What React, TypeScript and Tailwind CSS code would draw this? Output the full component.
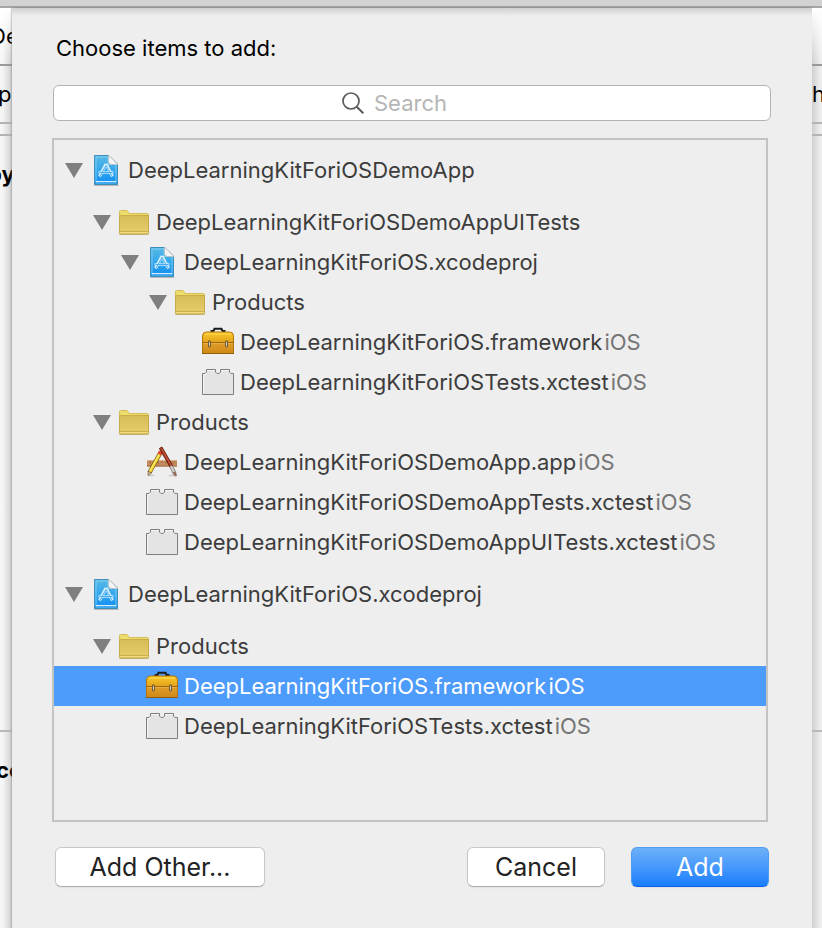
import { useId } from "react";

type Kind = "project" | "folder" | "toolbox" | "bundle" | "app";

type Item = {
  name: string;
  kind: Kind;
  level: number;
  platform?: string;
  selected?: boolean;
};

const items: Item[] = [
  { name: "DeepLearningKitForiOSDemoApp", kind: "project", level: 0 },
  { name: "DeepLearningKitForiOSDemoAppUITests", kind: "folder", level: 1 },
  { name: "DeepLearningKitForiOS.xcodeproj", kind: "project", level: 2 },
  { name: "Products", kind: "folder", level: 3 },
  { name: "DeepLearningKitForiOS.framework", kind: "toolbox", level: 4, platform: "iOS" },
  { name: "DeepLearningKitForiOSTests.xctest", kind: "bundle", level: 4, platform: "iOS" },
  { name: "Products", kind: "folder", level: 1 },
  { name: "DeepLearningKitForiOSDemoApp.app", kind: "app", level: 2, platform: "iOS" },
  { name: "DeepLearningKitForiOSDemoAppTests.xctest", kind: "bundle", level: 2, platform: "iOS" },
  { name: "DeepLearningKitForiOSDemoAppUITests.xctest", kind: "bundle", level: 2, platform: "iOS" },
  { name: "DeepLearningKitForiOS.xcodeproj", kind: "project", level: 0 },
  { name: "Products", kind: "folder", level: 1 },
  { name: "DeepLearningKitForiOS.framework", kind: "toolbox", level: 2, platform: "iOS", selected: true },
  { name: "DeepLearningKitForiOSTests.xctest", kind: "bundle", level: 2, platform: "iOS" },
];

const indents = ["pl-[11px]", "pl-[39px]", "pl-[67px]", "pl-[95px]", "pl-[123px]"];

function ProjectIcon() {
  const id = useId();
  return (
    <svg viewBox="0 0 32 32" className="size-8 shrink-0" aria-hidden="true">
      <defs>
        <linearGradient id={id} x1="0" y1="0" x2="0" y2="1">
          <stop offset="0" stopColor="#58b9e4" />
          <stop offset="0.5" stopColor="#35a8ee" />
          <stop offset="1" stopColor="#0d8bf0" />
        </linearGradient>
      </defs>
      <path d="M4 31.500h24.500" stroke="#b9b9b9" strokeWidth="1" />
      <path d="M4.500 1.500H18.500L27.500 10V30.500H4.500Z" fill={`url(#${id})`} stroke="#3b90bd" />
      <path d="M6 3H18V10.500H26V29H6Z" fill="none" stroke="#8ed2f6" strokeWidth="0.8" />
      <path d="M6 27.500H26" stroke="#d5effd" strokeWidth="1" />
      <path d="M18.500 1L28 10.500H21.500Q18.500 10.500 18.500 7.500Z" fill="#f4f4f4" stroke="#b8b8b8" strokeWidth="0.7" />
      <path d="M8.500 18.500H23.500" stroke="#b5e2fb" strokeWidth="2.600" />
      <path d="M16 10L9.500 22.500M16 10L22.500 22.500" fill="none" stroke="#d3effd" strokeWidth="3" />
      <path d="M16 11.500L9.800 22.500M16 11.500L22.200 22.500M9.500 18.500H22.500" fill="none" stroke="#3ba5ea" strokeWidth="0.9" />
    </svg>
  );
}

function FolderIcon() {
  const id = useId();
  return (
    <svg viewBox="0 0 32 32" className="size-8 shrink-0" aria-hidden="true">
      <defs>
        <linearGradient id={id} x1="0" y1="0" x2="0" y2="1">
          <stop offset="0" stopColor="#d6bc58" />
          <stop offset="1" stopColor="#e8cf6c" />
        </linearGradient>
      </defs>
      <path d="M1.500 28.500H30.500" stroke="#bdb693" />
      <path d="M1.500 27V5.500Q1.500 4.500 2.500 4.500H8.500Q9.500 4.500 10 5.500L11.500 7.500H29.500Q30.500 7.500 30.500 8.500V27Z" fill="#eedb69" stroke="#d3bd58" />
      <path d="M1.500 9.500H30.500V27Q30.500 28 29.500 28H2.500Q1.500 28 1.500 27Z" fill={`url(#${id})`} stroke="#c2a745" strokeWidth="0.8" />
      <path d="M2 25.500H30" stroke="#c9af4f" />
      <path d="M2 26.500H30" stroke="#f1df7e" />
    </svg>
  );
}

function ToolboxIcon() {
  const id = useId();
  return (
    <svg viewBox="0 0 32 32" className="size-8 shrink-0" aria-hidden="true">
      <defs>
        <linearGradient id={id} x1="0" y1="0" x2="0" y2="1">
          <stop offset="0" stopColor="#fbc928" />
          <stop offset="0.5" stopColor="#e2a11b" />
          <stop offset="0.55" stopColor="#dd9c25" />
          <stop offset="1" stopColor="#cf8718" />
        </linearGradient>
      </defs>
      <path d="M9.500 7V5H11.500L12.500 2.800H19.500L20.500 5H22.500V7" fill="none" stroke="#1c1c1c" strokeWidth="2" />
      <path d="M0.500 27.500V10Q0.500 6 4.500 6H27.500Q31.500 6 31.500 10V27.500Z" fill={`url(#${id})`} stroke="#b3760d" />
      <path d="M3 8H29" stroke="#ffdc50" />
      <path d="M0 16.500H32" stroke="#9c650b" />
      <path d="M1 17.500H31" stroke="#eeb544" strokeWidth="0.8" />
      <path d="M0 27.500H32" stroke="#945f0c" />
      <path d="M7.500 16V20M24.500 16V20" stroke="#5b4a28" strokeWidth="2.800" strokeLinecap="round" />
      <path d="M7.500 16V20M24.500 16V20" stroke="#d5cdb6" strokeWidth="1.200" strokeLinecap="round" />
    </svg>
  );
}

function BundleIcon() {
  return (
    <svg viewBox="0 0 32 32" className="size-8 shrink-0" aria-hidden="true">
      <path
        d="M0.500 28.500V7.500H3L4.500 6V3.500H13.500V6L15 7.500H17L18.500 6V3.500H27.500V6L29 7.500H31.500V28.500Z"
        fill="#e4e4e4"
        stroke="#7e7e7e"
      />
      <path d="M1.500 27.500V8.500H4.500M5.500 4.500H12.500M19.500 4.500H26.500" fill="none" stroke="#f5f5f5" />
    </svg>
  );
}

function AppIcon() {
  return (
    <svg viewBox="0 0 32 32" className="size-8 shrink-0" aria-hidden="true">
      <path d="M3 29.500H8M23 29.500H31" stroke="#c9c9c9" strokeWidth="1.500" />
      <path d="M1 14.500H31V20.500H1Z" fill="#c58d5e" />
      <path d="M1 14.500H31" stroke="#dcae84" />
      <path d="M1 20H31" stroke="#a56d42" />
      <path d="M4 15V17.500M8 15V17M12 15V17.500M16 15V17M20 15V17.500M24 15V17M28 15V17.500" stroke="#8e5d38" strokeWidth="0.8" />
      <path d="M14.500 6.500L3.500 26.500" stroke="#6f5714" strokeWidth="4.200" />
      <path d="M14.500 6.500L3.800 26" stroke="#f3d72e" strokeWidth="2.800" />
      <path d="M13.700 7.500L3.500 25.500" stroke="#fff08a" strokeWidth="0.9" />
      <path d="M13.400 8.500L15 5.500" stroke="#e8452f" strokeWidth="4" />
      <path d="M2 25L5.500 27L2.200 29.800Z" fill="#d9b98c" stroke="#5c4a30" strokeWidth="0.6" />
      <path d="M14.500 1.500L25.500 20.500" stroke="#54160d" strokeWidth="3.600" />
      <path d="M14.500 1.500L25.500 20.500" stroke="#a83a22" strokeWidth="2.200" />
      <path d="M15.500 2.500L25 19" stroke="#e0684b" strokeWidth="0.8" />
      <path d="M25 20L29 28" stroke="#6d6d6d" strokeWidth="3.600" />
      <path d="M25 20L28.500 27" stroke="#d5d0cc" strokeWidth="2.200" />
      <path d="M28 26L30 30" stroke="#9c6a5a" strokeWidth="2.500" />
    </svg>
  );
}

const icons: Record<Kind, () => React.JSX.Element> = {
  project: ProjectIcon,
  folder: FolderIcon,
  toolbox: ToolboxIcon,
  bundle: BundleIcon,
  app: AppIcon,
};

function Row({ item }: { item: Item }) {
  const Icon = icons[item.kind];
  const expandable = item.kind === "project" || item.kind === "folder";
  return (
    <li
      role="treeitem"
      aria-level={item.level + 1}
      aria-selected={!!item.selected}
      className={`flex items-center ${indents[item.level]} ${item.level === 0 ? "h-16" : "h-10"} ${
        item.selected ? "bg-[#4d9bfb] text-white" : "text-[#3c3c3c]"
      }`}
    >
      {expandable ? (
        <button type="button" aria-label={`Collapse ${item.name}`} className="w-[25px] shrink-0">
          <svg viewBox="0 0 18 15" className="h-[15px] w-[18px]" aria-hidden="true">
            <path d="M0 0H18L9 15Z" fill="#7f7f7f" />
          </svg>
        </button>
      ) : (
        <span className="w-[25px] shrink-0" />
      )}
      <Icon />
      <span className="pl-1.5 whitespace-nowrap">{item.name}</span>
      {item.platform && (
        <span className={`pl-0.5 ${item.selected ? "text-white" : "text-[#757575]"}`}>{item.platform}</span>
      )}
    </li>
  );
}

function WindowEdge({ side, labels }: { side: "left" | "right"; labels: string[] }) {
  const shade =
    side === "left"
      ? "w-3 bg-linear-to-r from-[#f6f6f6] from-20% to-[#cfcfcf]"
      : "w-[10px] bg-linear-to-l from-[#ededed] from-20% to-[#cfcfcf]";
  return (
    <div className={`flex shrink-0 flex-col overflow-hidden whitespace-nowrap text-black ${shade}`}>
      <div className="flex h-[58px] items-center border-b-2 border-[#999] bg-linear-to-b from-white to-transparent">
        <span className="-ml-2.5">{labels[0]}</span>
      </div>
      <div className="flex h-[58px] items-center border-b-2 border-[#b4b4b4]">
        <span className={side === "left" ? "-ml-0.5" : ""}>{labels[1]}</span>
      </div>
      <div className="h-3 border-b-2 border-[#b4b4b4]" />
      <div className="h-[596px] border-b-2 border-[#b9b9b9] pt-[22px] font-bold">
        <span className="-ml-3">{labels[2]}</span>
      </div>
      <div className="pt-[22px] font-bold">
        <span className="-ml-1">{labels[3]}</span>
      </div>
    </div>
  );
}

export default function App() {
  const plainButton =
    "h-10 rounded-md border border-[#c8c8c8] border-b-[#adadad] bg-white text-[25px] leading-8 text-[#222] shadow-xs";
  return (
    <div className="flex min-h-screen flex-col bg-[#eee] font-[Inter,sans-serif] text-[22px] leading-8">
      <div className="h-2 border-b-2 border-[#a6a6a6] bg-[#d3d3d3]" />
      <div className="flex flex-1">
        <WindowEdge side="left" labels={["De", "p", "by", "ce"]} />
        <main
          role="dialog"
          aria-labelledby="sheet-title"
          className="flex min-w-0 flex-1 flex-col bg-[#eee] bg-linear-to-b from-[#d0d0d0] to-[#eee] to-[8px] shadow-[0_0_2px_#777]"
        >
          <h1 id="sheet-title" className="px-11 pt-6 text-black">
            Choose items to add:
          </h1>
          <div className="px-[41px] pt-[21px]">
            <label className="flex h-9 items-center justify-center gap-2.5 rounded-md border border-[#b3b3b3] bg-white">
              <svg viewBox="0 0 22 22" className="size-[22px]" fill="none" stroke="#5a5a5a" strokeWidth="1.700" aria-hidden="true">
                <circle cx="9" cy="9" r="8" />
                <path d="M14.700 14.700L21.300 21.300" strokeWidth="2" />
              </svg>
              <input
                type="search"
                aria-label="Search"
                placeholder="Search"
                className="w-[108px] appearance-none bg-transparent outline-none placeholder:text-[#b5b5b5]"
              />
            </label>
          </div>
          <div className="flex flex-1 flex-col pt-[17px] pr-11 pl-10">
            <ul role="tree" aria-labelledby="sheet-title" className="flex-1 px-0.5 inset-ring-2 inset-ring-[#c3c3c3]">
              {items.map((item, i) => (
                <Row key={i} item={item} />
              ))}
            </ul>
          </div>
          <div className="flex px-[43px] pt-[25px] pb-[41px]">
            <button type="button" className={`${plainButton} w-[210px]`}>
              Add Other...
            </button>
            <div className="ml-auto flex gap-[26px]">
              <button type="button" className={`${plainButton} w-[138px]`}>
                Cancel
              </button>
              <button
                type="button"
                className="h-10 w-[138px] rounded-md border border-[#4f9df0] border-b-[#0f62f0] bg-linear-to-b from-[#6cb1f8] to-[#177dfd] text-[25px] leading-8 text-white shadow-xs"
              >
                Add
              </button>
            </div>
          </div>
        </main>
        <WindowEdge side="right" labels={["", "h", "", ""]} />
      </div>
    </div>
  );
}
